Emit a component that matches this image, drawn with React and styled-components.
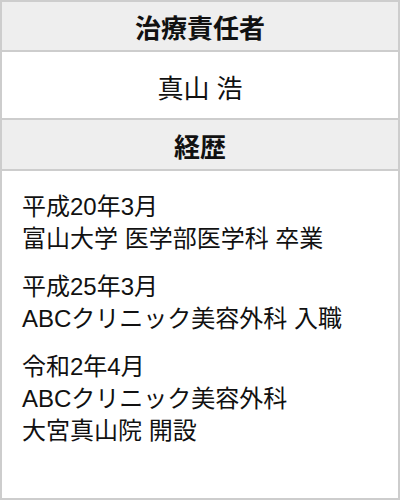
import React from 'react'
import styled, { createGlobalStyle } from 'styled-components';

const GlobalStyle = createGlobalStyle`
  html, body {
    margin: 0;
    padding: 0;
    background: white;
  }
  body {
    font-family: "Liberation Sans", "Noto Sans CJK JP", sans-serif;
    color: #111;
  }
`;

const Card = styled.div`
  width: 400px;
  height: 500px;
  box-sizing: border-box;
  border: 2px solid #cdcdcd;
  display: flex;
  flex-direction: column;
`;

const Heading = styled.div`
  height: ${props => props.height}px;
  background: #eeeeee;
  border-bottom: 2px solid #cdcdcd;
  display: flex;
  align-items: center;
  justify-content: center;
  font-size: 26px;
  font-weight: bold;
  padding-top: 1px;
  box-sizing: border-box;
`;

const Value = styled.div`
  height: 68px;
  border-bottom: 2px solid #cdcdcd;
  display: flex;
  align-items: center;
  justify-content: center;
  font-size: 26px;
  padding-top: 2px;
  box-sizing: border-box;
`;

const History = styled.div`
  flex: 1;
  padding: 20px 20px;
  display: flex;
  flex-direction: column;
  gap: 16px;
`;

const Entry = styled.div`
  font-size: 24px;
  line-height: 32px;
`;

const history = [
  ['平成20年3月', '富山大学 医学部医学科 卒業'],
  ['平成25年3月', 'ABCクリニック美容外科 入職'],
  ['令和2年4月', 'ABCクリニック美容外科', '大宮真山院 開設'],
];

const App = () => (
    <>
        <GlobalStyle />
        <Card>
            <Heading height={50}>治療責任者</Heading>
            <Value>真山 浩</Value>
            <Heading height={51}>経歴</Heading>
            <History>
                {history.map((lines, i) => (
                    <Entry key={i}>
                        {lines.map(line => <div key={line}>{line}</div>)}
                    </Entry>
                ))}
            </History>
        </Card>
    </>
)

export default App
